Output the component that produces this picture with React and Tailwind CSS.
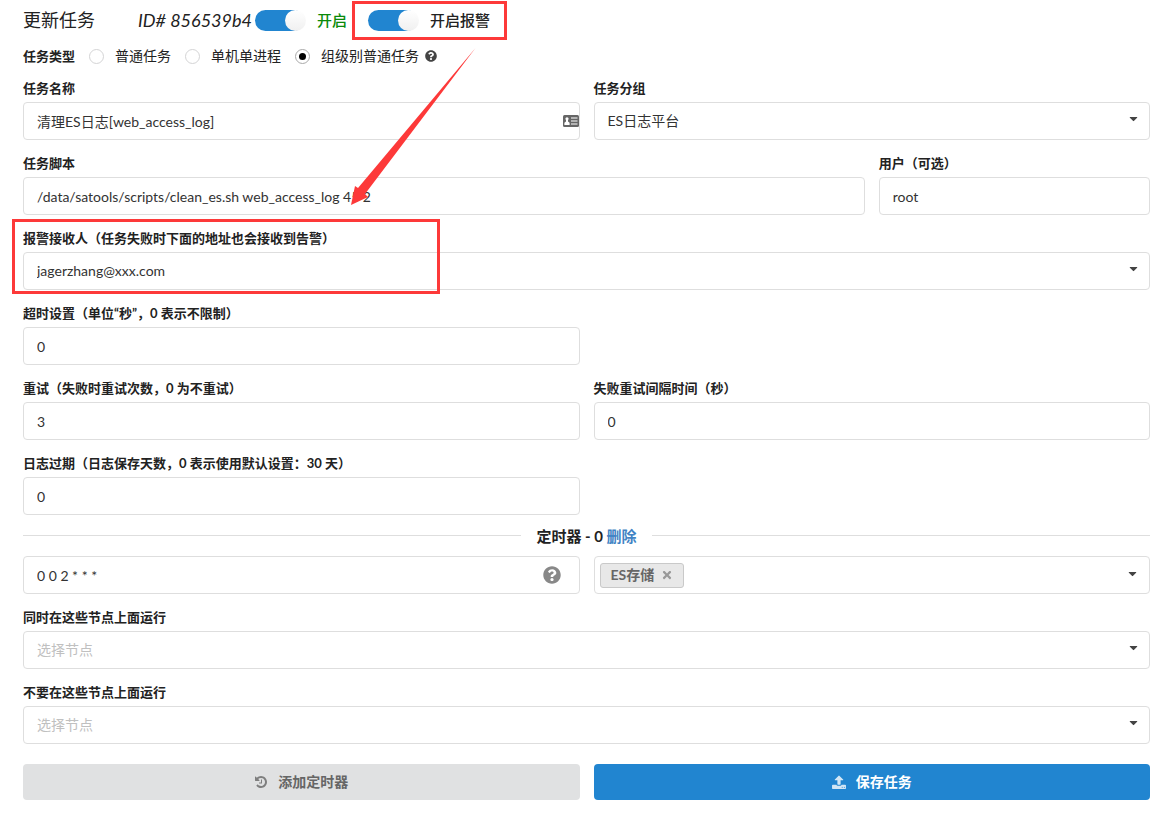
import { useState } from 'react';
import { FaCaretDown, FaQuestionCircle, FaTimes } from 'react-icons/fa';

const control =
  'block h-[38px] w-full rounded border border-[#dedede] bg-white px-[13px] text-sm text-[#333] outline-none focus:border-[#85b7d9]';

function Field({ id, label, className = '', children }) {
  return (
    <div className={className}>
      <label htmlFor={id} className="mb-1 block h-[19px] text-[13px] leading-[19px] font-bold whitespace-nowrap">
        {label}
      </label>
      {children}
    </div>
  );
}

function Caret() {
  return <FaCaretDown size={13} className="pointer-events-none absolute top-[10px] right-[10px] text-[#444]" />;
}

function Dropdown({ id, value, placeholder }) {
  return (
    <div className="relative">
      <select id={id} defaultValue={value || ''} className={`${control} appearance-none ${value ? '' : 'text-[#c0c0c0]'}`}>
        <option value={value || ''}>{value || placeholder}</option>
      </select>
      <Caret />
    </div>
  );
}

function Toggle({ label, className }) {
  const [on, setOn] = useState(true);
  return (
    <label className="flex items-center gap-[13px]">
      <input type="checkbox" checked={on} onChange={() => setOn(!on)} className="peer sr-only" />
      <span className="flex h-[21px] w-[49px] shrink-0 rounded-full bg-gray-200 peer-checked:bg-[#2185d0] peer-checked:pl-[30px]">
        <span className="size-[21px] shrink-0 rounded-full bg-linear-to-b from-white to-[#f0f0f0]" />
      </span>
      <span className={className}>{label}</span>
    </label>
  );
}

function CardIcon() {
  return (
    <svg width="16" height="12" viewBox="0 0 16 12" className="pointer-events-none absolute top-[13px] right-px">
      <rect width="16" height="12" rx="1.5" fill="#666" />
      <circle cx="4" cy="3.8" r="1.6" fill="#fff" />
      <path d="M3 5h2v1.5l1.6 1.2V10H1.4V7.700L3 6.500z" fill="#fff" />
      <path d="M8 3h6.500M8 6h6.500M8 9h6.500" stroke="#fff" strokeWidth="1.200" />
    </svg>
  );
}

function HistoryIcon() {
  return (
    <svg width="14" height="14" viewBox="0 0 1792 1792" fill="currentColor" className="opacity-80">
      <path d="M1664 896q0 156-61 298t-164 245-245 164-298 61q-172 0-327-72.5t-264-204.5q-7-10-6.5-22.5t8.500-20.500l137-138q10-9 25-9 16 2 23 12 73 95 179 147t225 52q104 0 198.500-40.500t163.500-109.500 109.500-163.500 40.500-198.500-40.500-198.500-109.500-163.500-163.500-109.500-198.500-40.500q-98 0-188 35.500t-160 101.500l137 138q31 30 14 69-17 40-59 40h-448q-26 0-45-19t-19-45v-448q0-42 40-59 39-17 69 14l130 129q107-101 244.500-156.500t284.500-55.500q156 0 298 61t245 164 164 245 61 298zm-640-288v448q0 14-9 23t-23 9h-320q-14 0-23-9t-9-23v-64q0-14 9-23t23-9h224v-352q0-14 9-23t23-9h64q14 0 23 9t9 23z" />
    </svg>
  );
}

function UploadIcon() {
  return (
    <svg width="14" height="15" viewBox="0 0 1664 1792" fill="currentColor" className="opacity-80">
      <path d="M1280 1472q0-26-19-45t-45-19-45 19-19 45 19 45 45 19 45-19 19-45zm256 0q0-26-19-45t-45-19-45 19-19 45 19 45 45 19 45-19 19-45zm128-224v320q0 40-28 68t-68 28h-1472q-40 0-68-28t-28-68v-320q0-40 28-68t68-28h427q21 56 70.500 92t110.500 36h256q61 0 110.500-36t70.500-92h427q40 0 68 28t28 68zm-325-648q-17 40-59 40h-256v448q0 26-19 45t-45 19h-256q-26 0-45-19t-19-45v-448h-256q-42 0-59-40-17-39 14-69l448-448q18-19 45-19t45 19l448 448q31 30 14 69z" />
    </svg>
  );
}

// Red marks that point from the alarm switch to the receiver field
function Annotations() {
  return (
    <div aria-hidden="true" className="pointer-events-none absolute inset-0">
      <div className="absolute top-px left-[352px] h-[39px] w-[155px] border-3 border-[#fd3939]" />
      <div className="absolute top-[219px] left-[12px] h-[75px] w-[428px] border-3 border-[#fd3939]" />
      <svg width="126" height="158" viewBox="0 0 126 158" className="absolute top-[48px] left-[350px]">
        <path d="M125.500 0L8 140L5 138L1 157L18 149L15 146Z" fill="#fd3939" />
      </svg>
    </div>
  );
}

const taskTypes = ['普通任务', '单机单进程', '组级别普通任务'];

export default function App() {
  const [type, setType] = useState(2);
  const [tag, setTag] = useState(true);

  return (
    <main className="relative bg-white pt-2 pr-[19px] pb-4 pl-[23px] font-['Lato','Noto_Sans_CJK_SC',sans-serif] text-sm text-[#222]">
      <header className="flex h-6 items-center whitespace-nowrap">
        <h1 className="w-[115px] text-lg leading-6">更新任务</h1>
        <em className="w-[117px] text-lg leading-6">ID# 856539b4</em>
        <div className="flex gap-[21px] text-[15px] leading-5">
          <Toggle label="开启" className="font-medium text-[#0a8a0a]" />
          <Toggle label="开启报警" className="font-medium" />
        </div>
      </header>

      <fieldset className="mt-[14px] flex h-5 items-center gap-[14px] whitespace-nowrap">
        <legend className="float-left text-[13px] leading-5 font-bold">任务类型</legend>
        {taskTypes.map((name, i) => (
          <label key={name} className="flex items-center gap-[11px] leading-5">
            <input
              type="radio"
              name="type"
              checked={type === i}
              onChange={() => setType(i)}
              className="flex size-[15px] appearance-none items-center justify-center rounded-full border border-[#d4d4d5] checked:border-[#aaa] checked:before:size-[7px] checked:before:rounded-full checked:before:bg-black"
            />
            {name}
          </label>
        ))}
        <FaQuestionCircle size={12} className="-ml-2 text-[#444]" />
      </fieldset>

      <form onSubmit={e => e.preventDefault()} className="mt-[13px]">
        <div className="grid grid-cols-4 gap-[14px]">
          <Field id="name" label="任务名称" className="col-span-2">
            <div className="relative">
              <input id="name" defaultValue="清理ES日志[web_access_log]" className={control} />
              <CardIcon />
            </div>
          </Field>
          <Field id="group" label="任务分组" className="col-span-2">
            <Dropdown id="group" value="ES日志平台" />
          </Field>

          <Field id="script" label="任务脚本" className="col-span-3">
            <input id="script" defaultValue="/data/satools/scripts/clean_es.sh web_access_log 45 2" className={control} />
          </Field>
          <Field id="user" label="用户（可选）">
            <input id="user" defaultValue="root" className={control} />
          </Field>

          <Field id="receiver" label="报警接收人（任务失败时下面的地址也会接收到告警）" className="col-span-4">
            <Dropdown id="receiver" value="jagerzhang@xxx.com" />
          </Field>

          <Field id="timeout" label="超时设置（单位“秒”，0 表示不限制）" className="col-span-2">
            <input id="timeout" defaultValue="0" className={control} />
          </Field>

          <Field id="retry" label="重试（失败时重试次数，0 为不重试）" className="col-span-2 col-start-1">
            <input id="retry" defaultValue="3" className={control} />
          </Field>
          <Field id="interval" label="失败重试间隔时间（秒）" className="col-span-2">
            <input id="interval" defaultValue="0" className={control} />
          </Field>

          <Field id="expire" label="日志过期（日志保存天数，0 表示使用默认设置：30 天）" className="col-span-2">
            <input id="expire" defaultValue="0" className={control} />
          </Field>
        </div>

        <div className="flex h-[41px] items-center gap-[15px] text-[15px] leading-5 font-bold">
          <hr className="flex-1 border-[#dedede]" />
          <h2>
            定时器 - 0 <a href="#delete" className="text-[#4183c4]">删除</a>
          </h2>
          <hr className="flex-1 border-[#dedede]" />
        </div>

        <div className="grid grid-cols-2 gap-[14px]">
          <div className="relative">
            <input aria-label="定时规则" defaultValue="0 0 2 * * *" className={control} />
            <FaQuestionCircle size={18} className="absolute top-[10px] right-[19px] text-[#888]" />
          </div>
          <div className="relative flex h-[38px] items-center rounded border border-[#dedede] pl-[5px]">
            {tag && (
              <span className="flex h-[25px] items-center gap-[7px] rounded-[3px] border border-[#c9c9c9] bg-[#e8e8e8] px-[10px] font-bold text-[#666]">
                ES存储
                <button type="button" aria-label="移除" onClick={() => setTag(false)}>
                  <FaTimes size={12} className="text-[#999]" />
                </button>
              </span>
            )}
            <input aria-label="节点组" className="h-full min-w-0 flex-1 px-2 outline-none" />
            <Caret />
          </div>

          <Field id="include" label="同时在这些节点上面运行" className="col-span-2">
            <Dropdown id="include" placeholder="选择节点" />
          </Field>
          <Field id="exclude" label="不要在这些节点上面运行" className="col-span-2">
            <Dropdown id="exclude" placeholder="选择节点" />
          </Field>
        </div>

        <div className="mt-5 grid grid-cols-2 gap-[14px] font-bold">
          <button type="button" className="flex h-9 items-center justify-center gap-[10px] rounded bg-[#e0e1e2] text-[#666]">
            <HistoryIcon />
            添加定时器
          </button>
          <button type="submit" className="flex h-9 items-center justify-center gap-[10px] rounded bg-[#2185d0] text-white">
            <UploadIcon />
            保存任务
          </button>
        </div>
      </form>

      <Annotations />
    </main>
  );
}
